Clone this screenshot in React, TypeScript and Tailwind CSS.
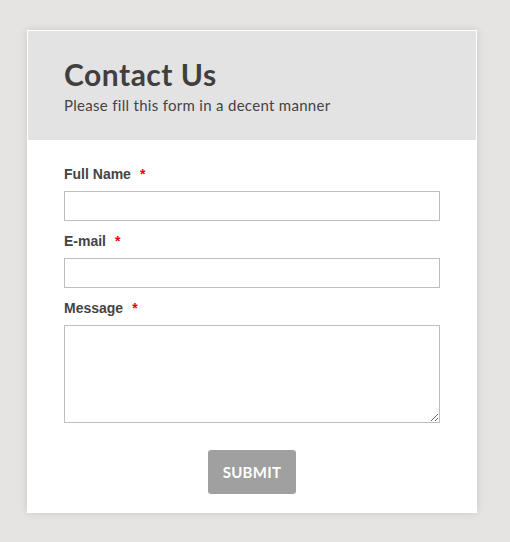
import React from "react";

// Simple contact form card on a light grey page.

const fields = [
  { label: "Full Name", name: "name", type: "text" },
  { label: "E-mail", name: "email", type: "email" },
];

function Label({ text }: { text: string }) {
  return (
    <label className="block h-5 text-[14px] leading-5 font-bold text-[#444] font-['Liberation_Sans',Arial,sans-serif]">
      {text}
      <span className="ml-[9px] text-[#e00]">*</span>
    </label>
  );
}

export default function App() {
  return (
    <div className="min-h-[542px] bg-[#e5e4e2] pt-[30px]">
      <div className="ml-[27px] w-[450px] border border-white bg-white shadow-[0_0_8px_rgba(0,0,0,0.12)]">
        {/* ── Header ───────────────────────────────────── */}
        <div className="h-[109px] bg-[#e3e3e3] px-[36px] pt-[25px] font-['Lato',sans-serif] text-[#3f3f3f]">
          <h1 className="text-[30px] leading-[36px] font-bold tracking-[0.5px]">Contact Us</h1>
          <p className="mt-[3px] text-[15px] leading-5 tracking-[0.3px] text-[#444]">
            Please fill this form in a decent manner
          </p>
        </div>

        {/* ── Form ─────────────────────────────────────── */}
        <form className="px-[36px] pt-[24px] pb-[18px]">
          {fields.map((f) => (
            <div key={f.name} className="mb-[10px]">
              <Label text={f.label} />
              <input
                type={f.type}
                name={f.name}
                className="mt-[7px] block h-[30px] w-full border border-[#bdbdbd] bg-white outline-none"
              />
            </div>
          ))}
          <div>
            <Label text="Message" />
            <textarea
              name="message"
              className="mt-[7px] block h-[98px] w-full border border-[#bdbdbd] bg-white outline-none"
            />
          </div>
          <div className="mt-[27px] flex justify-center">
            <button
              type="submit"
              className="h-[44px] w-[88px] rounded-[3px] bg-[#a0a0a0] text-[15px] font-bold tracking-[0.3px] text-white font-['Lato',sans-serif]"
            >
              SUBMIT
            </button>
          </div>
        </form>
      </div>
    </div>
  );
}
